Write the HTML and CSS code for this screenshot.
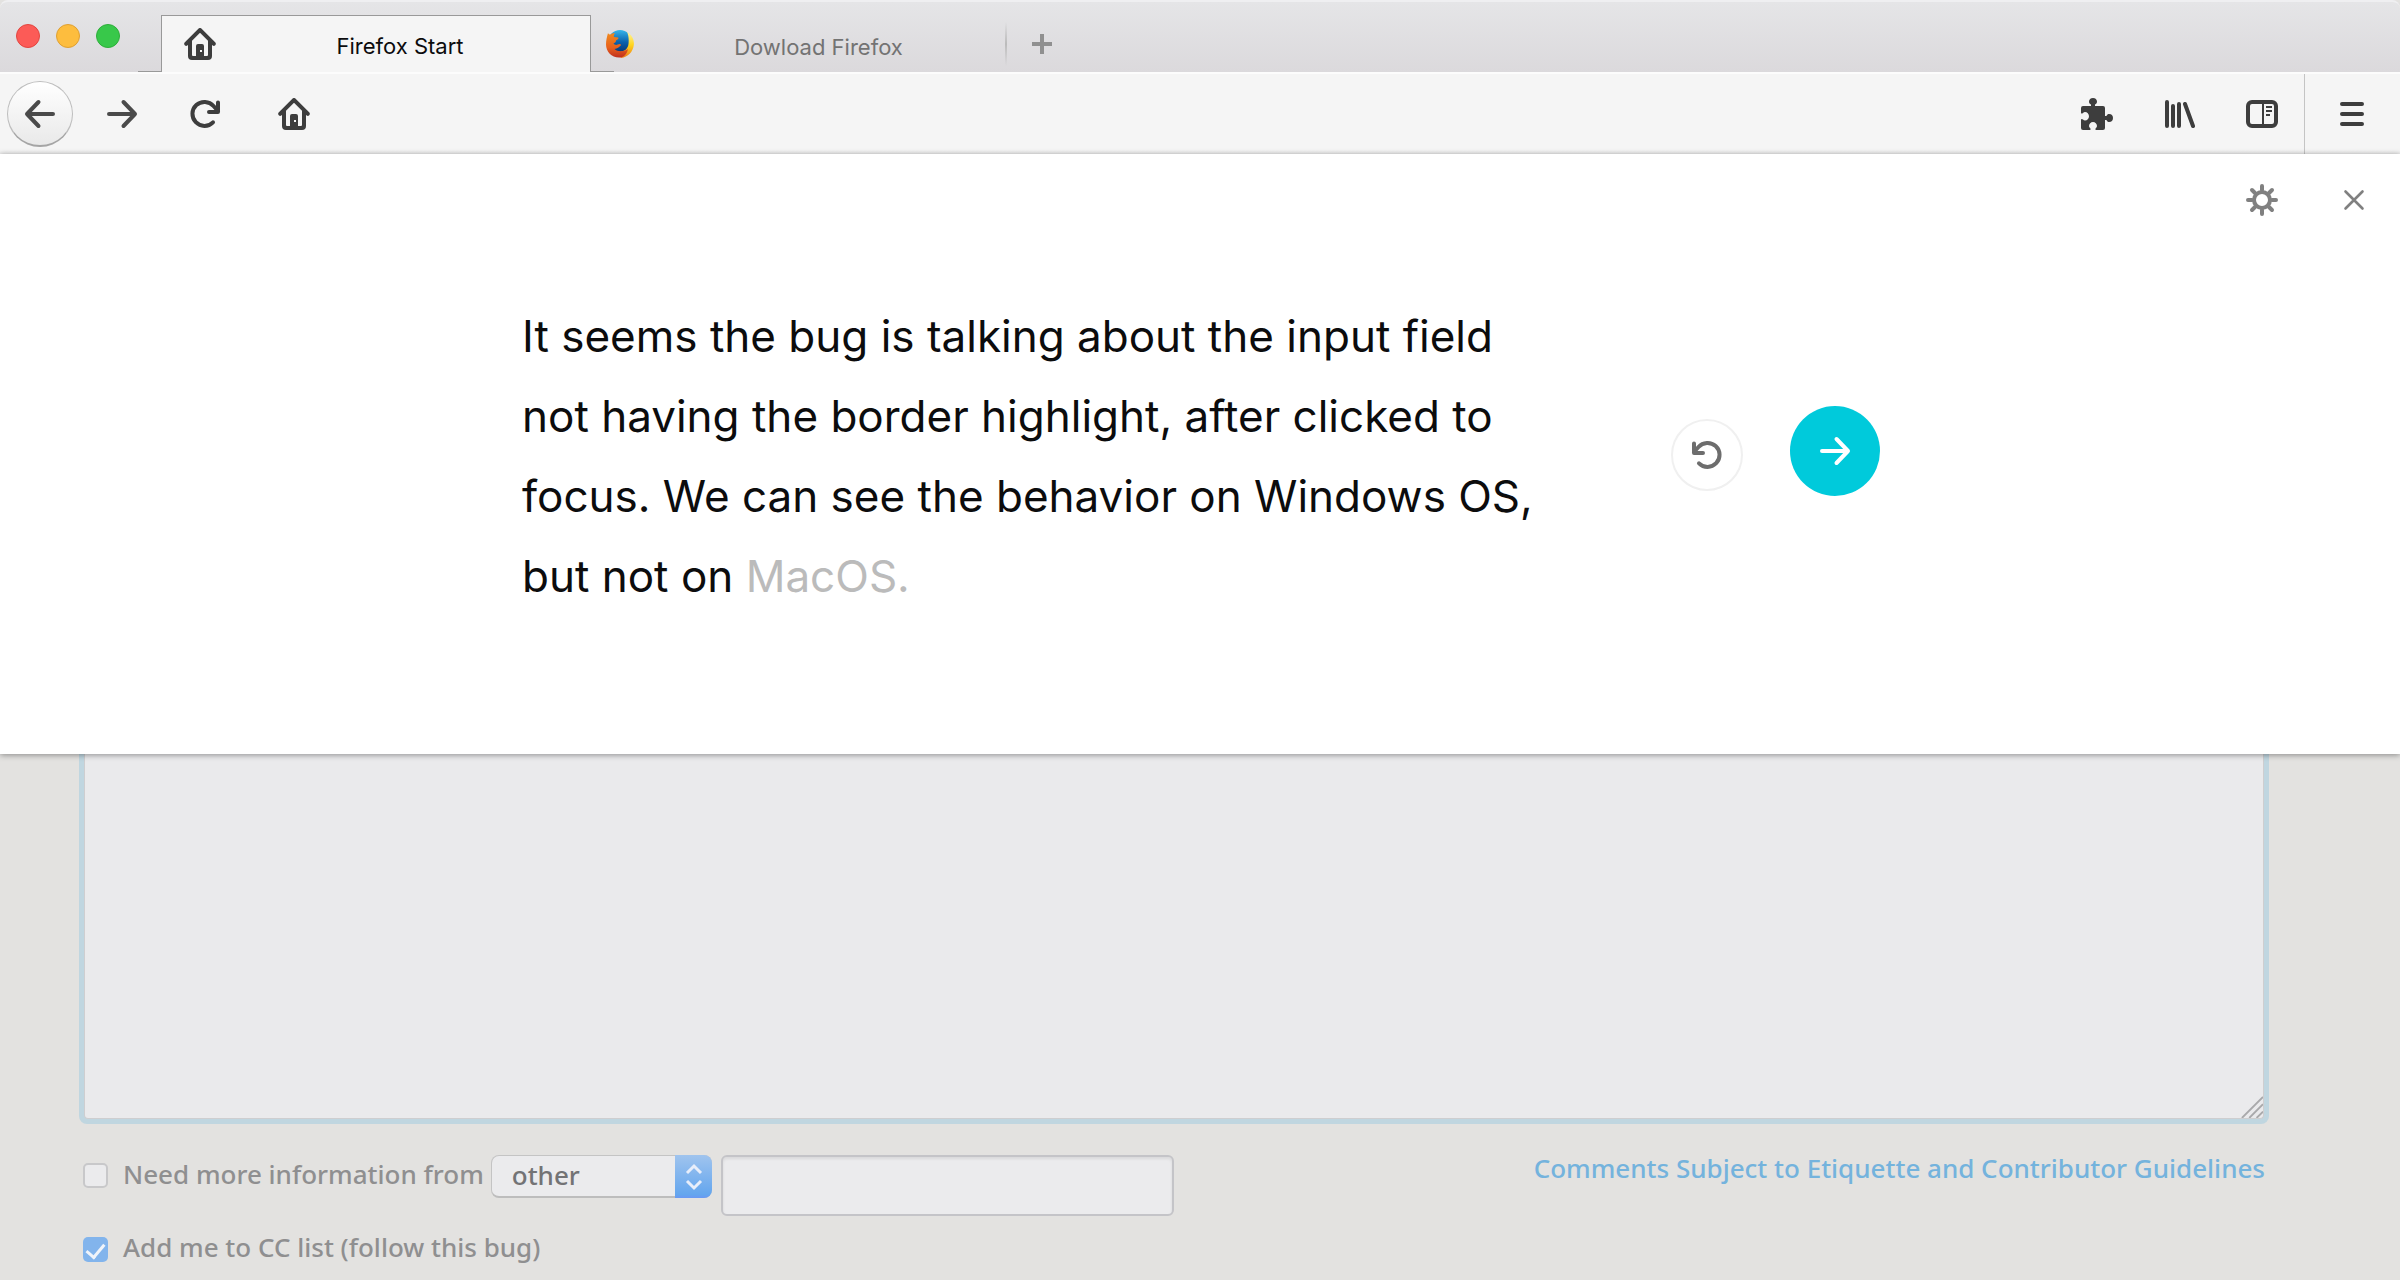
FILE: index.html
```html
<!DOCTYPE html>
<html lang="en">
<head>
<meta charset="utf-8">
<title>Firefox Start</title>
<link rel="stylesheet" href="styles.css">
</head>
<body>
<svg class="defs" aria-hidden="true">
  <symbol id="home" viewBox="0 0 16 16">
    <path fill="currentColor" fill-rule="evenodd" d="M15.7 7.3l-7-7a1 1 0 0 0-1.4 0l-7 7a1 1 0 0 0 1.4 1.4L2 8.4V14a2 2 0 0 0 2 2h8a2 2 0 0 0 2-2V8.4l.3.3a1 1 0 0 0 1.4-1.4zM12 13.5a.5.5 0 0 1-.5.5H10V9a1 1 0 0 0-1-1H7a1 1 0 0 0-1 1v5H4.500a.5.5 0 0 1-.5-.5V6.400l4-4 4 4zM8 11h1v1H8z"/>
  </symbol>
  <symbol id="arrow" viewBox="0 0 32 32">
    <path fill="none" stroke="currentColor" stroke-width="4" stroke-linecap="round" stroke-linejoin="round" d="M3 16h26M17.500 4l11.500 12-11.500 12"/>
  </symbol>
  <symbol id="reload" viewBox="0 0 32 32">
    <path fill="none" stroke="currentColor" stroke-width="4" stroke-linecap="round" stroke-linejoin="round" d="M24 24.300A12 12 0 1 1 24.500 8L29 13M29 4.500V14h-9"/>
  </symbol>
</svg>

<header class="browser">
  <div class="tabstrip">
    <div class="lights">
      <button class="light light-red" aria-label="Close window"></button>
      <button class="light light-amber" aria-label="Minimise"></button>
      <button class="light light-green" aria-label="Zoom"></button>
    </div>
    <div class="tab-edge"></div>
    <button class="tab tab-active">
      <svg class="icon"><use href="#home"/></svg>
      <span class="tab-title">Firefox Start</span>
    </button>
    <button class="tab tab-idle">
      <svg class="favicon" viewBox="0 0 28 28" aria-hidden="true">
        <defs>
          <linearGradient id="globe" x1="0" y1="0" x2="0" y2="1"><stop offset="0" stop-color="#35b6ea"/><stop offset=".5" stop-color="#0b62ad"/><stop offset="1" stop-color="#0a2f6b"/></linearGradient>
          <linearGradient id="fox" x1="0" y1="0" x2="0" y2="1"><stop offset="0" stop-color="#f08a1d"/><stop offset=".6" stop-color="#e8601c"/><stop offset="1" stop-color="#c02f1e"/></linearGradient>
          <linearGradient id="tail" x1="0" y1="0" x2="0" y2="1"><stop offset="0" stop-color="#fff3a0"/><stop offset=".5" stop-color="#ffd51e"/><stop offset="1" stop-color="#ee7a1a"/></linearGradient>
        </defs>
        <circle cx="14" cy="12" r="12" fill="url(#globe)"/>
        <path fill="url(#tail)" d="M21 2c5 3 7.500 8 6.800 13C27 22 22 27 15 28l-3-6c6 0 10-3 10.500-8C23 9 22.500 5 21 2z"/>
        <path fill="url(#fox)" d="M2 3c.5 1 1.500 1.500 2.500 1.500C6 3.500 8 3 9 3.500 8 4.500 7.500 6 8 7l4 .5c1 .5.5 1.500-2 3 0 2-1.500 2-2.500 3 2 2.500 4 1 6 .5 1.500 0 2 1 1 1.700-1.500 1-3 3-6 3.300 3 3 9 3 13.500 0C21 25 17 27.500 13 27.500 5.500 27.500 0 21.500 0 14.500 0 10 1 6.500 2 3z"/>
      </svg>
      <span class="tab-title">Dowload Firefox</span>
    </button>
    <button class="new-tab" aria-label="New tab">
      <svg class="plus" viewBox="0 0 20 20"><path fill="currentColor" d="M8 0h4v8h8v4h-8v8H8v-8H0V8h8z"/></svg>
    </button>
  </div>

  <nav class="toolbar" aria-label="Navigation">
    <button class="tool back" aria-label="Back"><svg class="icon flip"><use href="#arrow"/></svg></button>
    <button class="tool forward" aria-label="Forward"><svg class="icon"><use href="#arrow"/></svg></button>
    <button class="tool reload" aria-label="Reload"><svg class="icon"><use href="#reload"/></svg></button>
    <button class="tool" aria-label="Home"><svg class="icon"><use href="#home"/></svg></button>
    <div class="tools-right">
      <button class="tool" aria-label="Extensions">
        <svg class="icon" viewBox="0 0 32 32"><path fill="currentColor" d="M2 8h8V6.500C8.500 6 8 4.800 8 3.600 8 1.500 9.500 0 12 0s4 1.500 4 3.600c0 1.200-.5 2.400-2 2.900V8h8a2 2 0 0 1 2 2v8h1.500c.5-1.500 1.500-2 2.700-2 2.300 0 3.800 1.500 3.800 4s-1.500 4-3.800 4c-1.200 0-2.200-.5-2.700-2H24v8a2 2 0 0 1-2 2h-7c-.8-.3-.8-1.300 0-2 .7-.5 1-1.200 1-2 0-2.300-1.800-4-4-4s-4 1.700-4 4c0 .8.300 1.500 1 2 .8.700.8 1.700 0 2H2a2 2 0 0 1-2-2v-8.500c.3-.8 1.200-.7 2 0 .6.700 1.200 1 2 1 2.200 0 4-2 4-4.300s-1.800-4.300-4-4.300c-.8 0-1.400.3-2 1-.8.700-1.700.8-2 0V10a2 2 0 0 1 2-2z"/></svg>
      </button>
      <button class="tool" aria-label="Library">
        <svg class="icon" viewBox="0 0 32 32"><path fill="none" stroke="currentColor" stroke-width="4" stroke-linecap="round" d="M4 4v24M10 8v20M16 6v22M22 6l8 22"/></svg>
      </button>
      <button class="tool" aria-label="Sidebars">
        <svg class="icon" viewBox="0 0 32 32"><rect x="2" y="4" width="28" height="24" rx="4" fill="none" stroke="currentColor" stroke-width="4"/><path stroke="currentColor" stroke-width="2" d="M17 4v24M20 9h6M20 13h6M20 17h4"/></svg>
      </button>
      <button class="tool menu" aria-label="Menu">
        <svg class="icon" viewBox="0 0 32 32"><path stroke="currentColor" stroke-width="4" stroke-linecap="round" d="M6 6h20M6 16h20M6 26h20"/></svg>
      </button>
    </div>
  </nav>
</header>

<section class="voice">
  <div class="voice-controls">
    <button class="tool" aria-label="Settings">
      <svg class="icon" viewBox="0 0 32 32"><g fill="none" stroke="currentColor" stroke-width="4" stroke-linecap="round"><circle cx="16" cy="16" r="8"/><path d="M16 2v4M16 26v4M2 16h4M26 16h4M6 6l3 3M23 23l3 3M6 26l3-3M23 9l3-3"/></g></svg>
    </button>
    <button class="tool" aria-label="Close">
      <svg class="icon" viewBox="0 0 32 32"><path stroke="currentColor" stroke-width="2.600" stroke-linecap="round" d="M7.500 7.500l17 17M24.500 7.500l-17 17"/></svg>
    </button>
  </div>
  <div class="voice-body">
    <p class="transcript">It seems the bug is talking about the input field<br>not having the border highlight, after clicked to<br>focus. We can see the behavior on Windows OS,<br>but not on <span class="pending">MacOS.</span></p>
    <div class="actions">
      <button class="round undo" aria-label="Start again"><svg class="icon flip"><use href="#reload"/></svg></button>
      <button class="round submit" aria-label="Submit"><svg class="icon"><use href="#arrow"/></svg></button>
    </div>
  </div>
</section>

<main class="bug">
  <div class="comment">
    <textarea class="comment-box" aria-label="Comment"></textarea>
    <svg class="grip" viewBox="0 0 24 24" aria-hidden="true"><path stroke="#a9a9ab" stroke-width="2" d="M1 24L24 1M9 24L24 9M17 24l7-7"/></svg>
  </div>
  <div class="form-rows">
    <div class="options">
      <div class="row row-need">
        <input class="check" type="checkbox" id="need">
        <label for="need">Need more information from</label>
        <div class="picker">
          <select class="select" aria-label="Information from"><option>other</option></select>
          <svg class="stepper" viewBox="0 0 37 43" aria-hidden="true"><path fill="none" stroke="#e8eefa" stroke-width="3" d="M12 18l7-7 7 7M12 26l7 7 7-7"/></svg>
        </div>
        <input class="who" type="text" aria-label="Person">
      </div>
      <div class="row row-cc">
        <input class="check" type="checkbox" id="cc" checked>
        <label for="cc">Add me to CC list (follow this bug)</label>
      </div>
    </div>
    <a class="guidelines" href="#guidelines">Comments Subject to Etiquette and Contributor Guidelines</a>
  </div>
</main>
</body>
</html>
```
FILE: styles.css
```css
* { box-sizing: border-box; }

body {
  margin: 0;
  min-height: 100vh;
  display: flex;
  flex-direction: column;
  background: #e3e2e0;
  font-family: Inter, "Liberation Sans", sans-serif;
  overflow-x: hidden;
}

button {
  padding: 0;
  border: 0;
  background: none;
  color: inherit;
  font: inherit;
}

.defs { position: absolute; width: 0; height: 0; }
.icon { display: block; width: 32px; height: 32px; flex: none; }
.flip { transform: scaleX(-1); }

/* Tab strip */
.tabstrip {
  display: flex;
  height: 72px;
  border-top: 2px solid #efeff1;
  border-radius: 8px 8px 0 0;
  background: linear-gradient(#e5e5e7, #dbd9dc);
}
.lights {
  display: flex;
  gap: 16px;
  width: 138px;
  padding: 22px 0 0 16px;
}
.light { width: 24px; height: 24px; border-radius: 50%; border: 1px solid; }
.light-red { background: #fc5b57; border-color: #e24640; }
.light-amber { background: #fdbd3e; border-color: #dfa033; }
.light-green { background: #38c84a; border-color: #2eae3a; }
.tab-edge { width: 23px; border-bottom: 1px solid #999; }
.tab { display: flex; align-items: flex-start; font-size: 22px; }
.tab .icon { color: #3d3d3d; }
.tab-title { flex: 1; text-align: center; line-height: 36px; }
.tab-active {
  width: 430px;
  margin-top: 13px;
  padding: 12px 38px 0 22px;
  border: 1px solid #999;
  border-bottom: 0;
  background: #f5f5f5;
  color: #0c0c0d;
}
.tab-active .tab-title { padding-left: 32px; }
.tab-idle {
  width: 414px;
  padding: 28px 2px 0 15px;
  background: linear-gradient(#999, #999) left bottom / 23px 1px no-repeat;
  color: #737373;
}
.favicon { width: 28px; height: 28px; flex: none; }
.tab-idle .tab-title { line-height: 34px; }
.new-tab {
  width: 74px;
  padding: 14px 0 0 27px;
  color: #909090;
  background: linear-gradient(#bbb0, #bbb 50%, #bbb0) left 20px / 2px 44px no-repeat;
}
.plus { display: block; width: 20px; height: 20px; }

/* Toolbar */
.toolbar {
  display: flex;
  align-items: center;
  height: 82px;
  padding-left: 7px;
  border-top: 2px solid #fcfcfc;
  background: linear-gradient(#f5f5f5 95%, #eee);
  color: #3d3d3d;
}
.tool {
  display: flex;
  align-items: center;
  justify-content: center;
  width: 84px;
  height: 66px;
}
.back {
  width: 66px;
  border: 1px solid #bdbdbd;
  border-bottom: 2px solid #a5a5a5;
  border-radius: 50%;
  background: linear-gradient(#fff, #e9e9e9);
  color: #4a4a4a;
}
.forward { width: 98px; color: #4a4a4a; }
.reload { width: 68px; }
.reload + .tool { width: 110px; }
.tools-right { display: flex; align-items: stretch; height: 100%; margin-left: auto; }
.tools-right .tool { height: 100%; width: 82px; }
.tools-right .menu { width: 96px; border-left: 1px solid #c4c4c4; padding-right: 1px; }
.tools-right .tool:nth-child(3) { width: 84px; }

/* Dictation panel */
.voice {
  position: relative;
  z-index: 1;
  display: flex;
  align-items: center;
  justify-content: center;
  min-height: 600px;
  background: #fff;
  box-shadow: 0 1px 6px rgba(0, 0, 0, .4);
}
.voice-controls {
  position: absolute;
  top: 13px;
  right: 4px;
  display: flex;
  gap: 8px;
  color: #808080;
}
.voice-body {
  display: flex;
  align-items: center;
  justify-content: space-between;
  width: 1360px;
  max-width: 100%;
  padding-left: 2px;
}
.transcript {
  margin: 0;
  padding-top: 4px;
  font-size: 44px;
  line-height: 80px;
  color: #0c0c0d;
  white-space: nowrap;
}
.pending { color: #bbb; }
.actions { display: flex; align-items: flex-end; gap: 47px; padding-bottom: 6px; }
.round { display: flex; align-items: center; justify-content: center; border-radius: 50%; }
.undo { width: 72px; height: 72px; margin-bottom: 5px; border: 2px solid #f0f0f0; color: #6d6d6d; }
.submit { width: 90px; height: 90px; background: #00cadb; color: #fff; }

/* Bug form */
.bug {
  padding: 0 131px 16px 79px;
  font-family: "Noto Sans", "Open Sans", sans-serif;
  font-size: 26px;
  font-weight: 500;
  color: #8f8f90;
}
.comment {
  position: relative;
  height: 370px;
  padding: 0 5px 5px;
  border-radius: 0 0 8px 8px;
  background: #c0d6e0;
}
.comment-box {
  display: block;
  width: 100%;
  height: 100%;
  border: 1px solid #ceced0;
  border-top: 0;
  border-radius: 0 0 4px 4px;
  background: #eaeaec;
  resize: none;
}
.grip { position: absolute; right: 6px; bottom: 6px; width: 22px; height: 22px; }
.form-rows { display: flex; justify-content: space-between; padding: 31px 4px 0; }
.row { display: flex; align-items: center; gap: 15px; }
.row-need { align-items: flex-start; height: 62px; margin-bottom: 14px; line-height: 38px; }
.row-cc { line-height: 32px; }
.row-cc label { padding-bottom: 4px; }
.check {
  appearance: none;
  display: grid;
  place-items: center;
  width: 25px;
  height: 25px;
  margin: 0;
  border: 2px solid #c8c8ca;
  border-radius: 5px;
  background: #ebebed;
}
.row-need .check { margin-top: 8px; }
.check:checked { border: 0; background: #82b4ec; }
.check:checked::after {
  content: "";
  width: 8px;
  height: 15px;
  border: solid #f0f4fa;
  border-width: 0 3px 3px 0;
  transform: rotate(40deg);
}
.picker { position: relative; width: 221px; height: 43px; margin-left: -8px; }
.select {
  appearance: none;
  width: 100%;
  height: 100%;
  padding: 0 20px 4px;
  border: 1px solid #c4c4c4;
  border-bottom: 2px solid #bdbdbd;
  border-radius: 8px;
  background: #ebebed;
  font: inherit;
  color: #737375;
}
.stepper {
  position: absolute;
  top: 0;
  right: 0;
  width: 37px;
  height: 43px;
  border-radius: 0 8px 8px 0;
  background: linear-gradient(#a0c4ee, #64a6ee 92%, #6a98f4);
  pointer-events: none;
}
.who {
  width: 453px;
  height: 61px;
  margin-left: -6px;
  padding: 0 12px;
  border: 2px solid #c4c4c8;
  border-radius: 6px;
  background: #ebebed;
  box-shadow: inset 0 2px 3px rgba(0, 0, 0, .08);
  font: inherit;
}
.guidelines { line-height: 26px; color: #74b3dd; text-decoration: none; white-space: nowrap; }
```
